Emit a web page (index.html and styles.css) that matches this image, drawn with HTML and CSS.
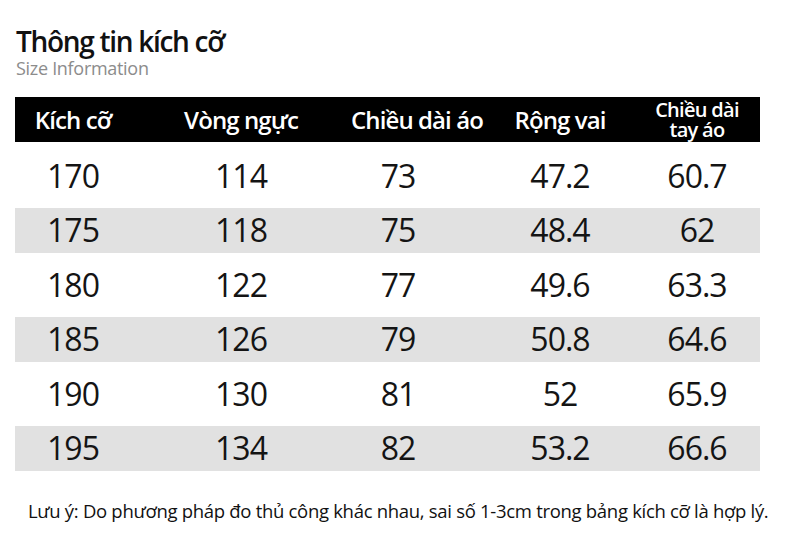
FILE: index.html
```html
<!DOCTYPE html>
<html lang="vi">
<head>
<meta charset="utf-8">
<title>Thông tin kích cỡ</title>
<link rel="stylesheet" href="styles.css">
</head>
<body>
<div class="page">
  <h1 class="title">Thông tin kích cỡ</h1>
  <div class="subtitle">Size Information</div>
  <div class="table">
    <div class="head">
      <div class="cell">Kích cỡ</div>
      <div class="cell">Vòng ngực</div>
      <div class="cell">Chiều dài áo</div>
      <div class="cell">Rộng vai</div>
      <div class="cell two">Chiều dài<br>tay áo</div>
    </div>
    <div class="body">
      <div class="row"><div class="cell">170</div><div class="cell">114</div><div class="cell c3">73</div><div class="cell">47.2</div><div class="cell">60.7</div></div>
      <div class="row alt"><div class="cell">175</div><div class="cell">118</div><div class="cell c3">75</div><div class="cell">48.4</div><div class="cell">62</div></div>
      <div class="row"><div class="cell">180</div><div class="cell">122</div><div class="cell c3">77</div><div class="cell">49.6</div><div class="cell">63.3</div></div>
      <div class="row alt"><div class="cell">185</div><div class="cell">126</div><div class="cell c3">79</div><div class="cell">50.8</div><div class="cell">64.6</div></div>
      <div class="row"><div class="cell">190</div><div class="cell">130</div><div class="cell c3">81</div><div class="cell">52</div><div class="cell">65.9</div></div>
      <div class="row alt"><div class="cell">195</div><div class="cell">134</div><div class="cell c3">82</div><div class="cell">53.2</div><div class="cell">66.6</div></div>
    </div>
  </div>
  <p class="note">Lưu ý: Do phương pháp đo thủ công khác nhau, sai số 1-3cm trong bảng kích cỡ là hợp lý.</p>
</div>
</body>
</html>
```
FILE: styles.css
```css
html, body {
  margin: 0;
  padding: 0;
  background: #ffffff;
}
body {
  font-family: "Open Sans", "Noto Sans", "DejaVu Sans", sans-serif;
  color: #111111;
}
.page {
  width: 745px;
  padding: 24px 0 0 15px;
}
.title {
  margin: 0;
  font-size: 28px;
  line-height: 34px;
  font-weight: 600;
  letter-spacing: -1.3px;
  color: #111111;
  padding-left: 1px;
}
.subtitle {
  font-size: 18px;
  line-height: 20px;
  letter-spacing: -0.3px;
  color: #8c8c8c;
  padding-left: 1px;
}
.table {
  margin-top: 19px;
}
.head,
.row {
  display: grid;
  grid-template-columns: 116px 220px 124px 170px 104px 1fr;
  align-items: center;
}
.head {
  height: 45px;
  background: #000000;
  color: #ffffff;
}
.head .cell {
  text-align: center;
  font-size: 24px;
  line-height: 28px;
  font-weight: 600;
  letter-spacing: -0.9px;
  white-space: nowrap;
}
.head .cell.two {
  font-size: 20px;
  line-height: 20px;
  letter-spacing: -0.7px;
}
.body {
  display: flex;
  flex-direction: column;
  gap: 9.5px;
  padding-top: 11px;
}
.row {
  height: 45px;
}
.row.alt {
  background: #e1e1e1;
}
.row .cell {
  text-align: center;
  font-size: 32px;
  line-height: 40px;
  letter-spacing: -1px;
  color: #141414;
}
.row .cell.c3 {
  padding-right: 30px;
}
.note {
  margin: 29px 0 0 13px;
  font-size: 18.5px;
  line-height: 22px;
  letter-spacing: -0.3px;
  color: #111111;
  white-space: nowrap;
}
```
